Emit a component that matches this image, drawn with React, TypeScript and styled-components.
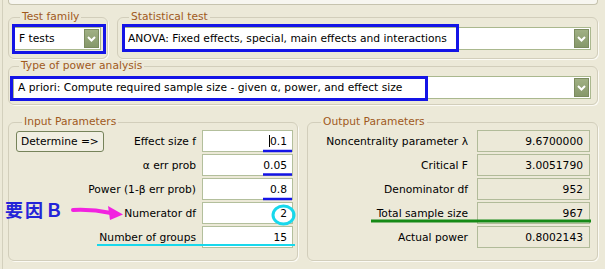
import React from 'react';
import styled, { createGlobalStyle } from 'styled-components';

const GlobalStyle = createGlobalStyle`
  html, body {
    margin: 0;
    padding: 0;
    background: #ece9d8;
  }
`;

const Screen = styled.div`
  position: relative;
  width: 605px;
  height: 269px;
  overflow: hidden;
  box-sizing: border-box;
  padding-left: 2px;
  background: #ece9d8;
  font-family: 'DejaVu Sans', 'Noto Sans', sans-serif;
  font-size: 10.7px;
  color: #000;
`;

const Frame = styled.div`
  height: 100%;
  box-sizing: border-box;
  border-left: 1px solid #d3d0bd;
  padding: 0 7px 0 5px;
`;

const TopStrip = styled.div`
  height: 4px;
  background: #f7f6f0;
  border: 1px solid #c6c3ae;
  border-top: none;
  border-radius: 0 0 4px 4px;
`;

const Row = styled.div<{ $top: number; $gap: number }>`
  display: flex;
  gap: ${p => p.$gap}px;
  margin-top: ${p => p.$top}px;
`;

const Group = styled.fieldset<{ $width?: number; $top?: number; $pad: string }>`
  margin: ${p => p.$top || 0}px 0 0 0;
  min-width: 0;
  box-sizing: border-box;
  ${p => (p.$width ? `width: ${p.$width}px; flex: none;` : 'flex: 1;')}
  padding: ${p => p.$pad};
  border: 1px solid #d2cebb;
  border-radius: 6px;
  box-shadow: 1px 1px 0 #fbfaf4;
`;

const Legend = styled.legend`
  margin-left: 6px;
  padding: 0 2px;
  line-height: 12px;
  color: #a0591c;
`;

const Select = styled.div`
  display: flex;
  align-items: center;
  height: 23px;
  box-sizing: border-box;
  background: #fff;
  border: 1px solid #aab88e;
  padding-left: 4px;
`;

const SelectText = styled.span`
  flex: 1;
  white-space: nowrap;
  overflow: hidden;
`;

const ArrowButton = styled.span`
  display: flex;
  align-items: center;
  justify-content: center;
  width: 15px;
  height: 19px;
  margin-right: 1px;
  box-sizing: border-box;
  background: linear-gradient(#a0b084, #86986a);
  border: 1px solid #7b8b5e;
`;

const ParamGrid = styled.div<{ $field: number; $gap: number }>`
  display: grid;
  grid-template-columns: 1fr ${p => p.$field}px;
  grid-auto-rows: 22px;
  row-gap: 2px;
  column-gap: ${p => p.$gap}px;
`;

const LabelCell = styled.div`
  display: flex;
  align-items: center;
  justify-content: flex-end;
  white-space: nowrap;
`;

const Button = styled.button`
  margin-right: auto;
  height: 21px;
  padding: 0 4px;
  font: inherit;
  color: #000;
  background: #f1efe3;
  border: 1px solid #76835a;
  border-radius: 3px;
`;

const Field = styled.div<{ $output?: boolean }>`
  display: flex;
  align-items: center;
  justify-content: flex-end;
  box-sizing: border-box;
  padding-right: ${p => (p.$output ? 6 : 5)}px;
  background: ${p => (p.$output ? '#ece9d8' : '#fff')};
  border: 1px solid ${p => (p.$output ? '#b1bb99' : '#b3bf9c')};
`;

const Caret = styled.span`
  display: inline-block;
  width: 0;
  height: 12px;
  border-left: 1px solid #000;
  vertical-align: middle;
`;

const Overlay = styled.svg`
  position: absolute;
  left: 0;
  top: 0;
  pointer-events: none;
`;

const Note = styled.span`
  position: absolute;
  left: 5px;
  top: 200px;
  font-family: 'Noto Sans CJK JP', sans-serif;
  font-weight: 700;
  font-size: 18px;
  line-height: 18px;
  letter-spacing: 2px;
  color: #2424d8;
`;

const Chevron = () => (
  <svg width="9" height="6" viewBox="0 0 9 6">
    <path d="M1 1 L4.5 4.5 L8 1" fill="none" stroke="#fff" strokeWidth="2" />
  </svg>
);

const Dropdown: React.FC<{ value: string }> = ({ value }) => (
  <Select>
    <SelectText>{value}</SelectText>
    <ArrowButton>
      <Chevron />
    </ArrowButton>
  </Select>
);

const inputs = [
  { label: 'Effect size f', value: '0.1' },
  { label: 'α err prob', value: '0.05' },
  { label: 'Power (1-β err prob)', value: '0.8' },
  { label: 'Numerator df', value: '2' },
  { label: 'Number of groups', value: '15' },
];

const outputs = [
  { label: 'Noncentrality parameter λ', value: '9.6700000' },
  { label: 'Critical F', value: '3.0051790' },
  { label: 'Denominator df', value: '952' },
  { label: 'Total sample size', value: '967' },
  { label: 'Actual power', value: '0.8002143' },
];

const App: React.FC = () => {
  return (
    <Screen>
      <GlobalStyle />
      <Frame>
        <TopStrip />

        <Row $top={6} $gap={9}>
          <Group $width={100} $pad="4px 6px 8px 5px">
            <Legend>Test family</Legend>
            <Dropdown value="F tests" />
          </Group>
          <Group $pad="4px 6px 8px 5px">
            <Legend>Statistical test</Legend>
            <Dropdown value="ANOVA: Fixed effects, special, main effects and interactions" />
          </Group>
        </Row>

        <Group $top={1} $pad="4px 6px 5px 4px">
          <Legend>Type of power analysis</Legend>
          <Dropdown value="A priori: Compute required sample size - given α, power, and effect size" />
        </Group>

        <Row $top={11} $gap={9}>
          <Group $width={290} $pad="2px 4px 12px 7px">
            <Legend>Input Parameters</Legend>
            <ParamGrid $field={91} $gap={6}>
              {inputs.map((row, i) => (
                <React.Fragment key={row.label}>
                  <LabelCell>
                    {i === 0 && <Button>Determine =&gt;</Button>}
                    {row.label}
                  </LabelCell>
                  <Field>
                    {i === 0 && <Caret />}
                    {row.value}
                  </Field>
                </React.Fragment>
              ))}
            </ParamGrid>
          </Group>
          <Group $pad="2px 7px 12px 7px">
            <Legend>Output Parameters</Legend>
            <ParamGrid $field={113} $gap={9}>
              {outputs.map(row => (
                <React.Fragment key={row.label}>
                  <LabelCell>{row.label}</LabelCell>
                  <Field $output>{row.value}</Field>
                </React.Fragment>
              ))}
            </ParamGrid>
          </Group>
        </Row>
      </Frame>

      {/* hand-drawn markings laid over the screenshot */}
      <Overlay width="605" height="269" viewBox="0 0 605 269">
        <g fill="none" stroke="#1414e6" strokeWidth="3">
          <rect x="13.5" y="25.5" width="91" height="27" />
          <rect x="123.5" y="25.5" width="334" height="25" />
          <rect x="11.5" y="77.5" width="415" height="22" />
        </g>
        <g stroke="#1414e6" strokeWidth="2.5">
          <line x1="263" y1="151" x2="292" y2="151" />
          <line x1="263" y1="174.5" x2="292" y2="174.5" />
          <line x1="263" y1="199" x2="292" y2="199" />
        </g>
        <ellipse cx="283.5" cy="215" rx="10.5" ry="9" fill="none" stroke="#18d8ec" strokeWidth="3" />
        <line x1="97" y1="245" x2="295" y2="245" stroke="#18d8ec" strokeWidth="2" />
        <line x1="371" y1="221" x2="591" y2="221" stroke="#168a16" strokeWidth="3" />
        <path d="M73 210 Q92 209 111 213" fill="none" stroke="#f222e0" strokeWidth="4" strokeLinecap="round" />
        <path d="M108 206 L123 214.5 L110 220 Z" fill="#f222e0" />
      </Overlay>
      <Note>要因Ｂ</Note>
    </Screen>
  );
};

export default App;
